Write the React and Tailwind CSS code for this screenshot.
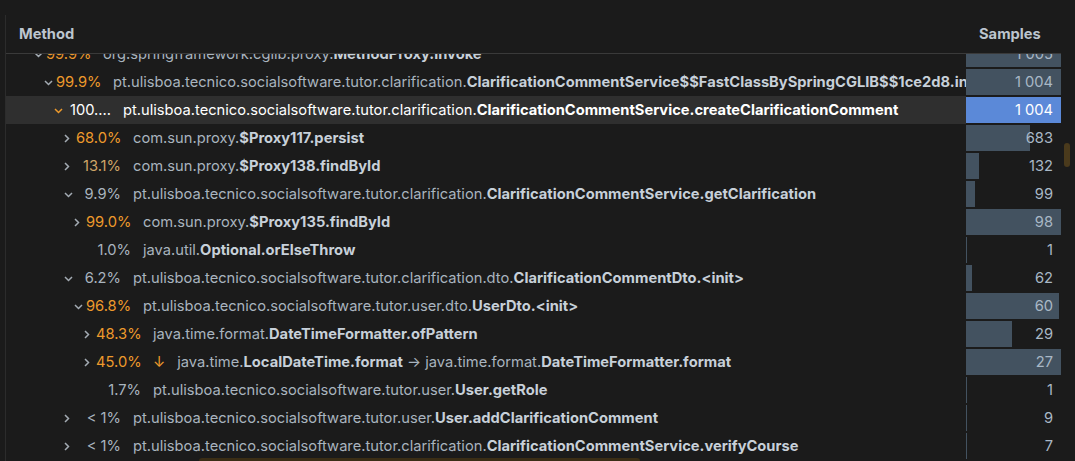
import React from "react";

const PKG = "pt.ulisboa.tecnico.socialsoftware.tutor.";

const rows = [
  { d: 0, c: "open", pct: "99.9%", tone: "hot", pkg: "org.springframework.cglib.proxy.", name: "MethodProxy.invoke", n: "1 005", w: 95 },
  { d: 1, c: "open", pct: "99.9%", tone: "hot", pkg: PKG + "clarification.", name: "ClarificationCommentService$$FastClassBySpringCGLIB$$1ce2d8.invoke", n: "1 004", w: 95 },
  { d: 2, c: "open", pct: "100....", tone: "sel", pkg: PKG + "clarification.", name: "ClarificationCommentService.createClarificationComment", n: "1 004", w: 95, selected: true },
  { d: 3, c: "closed", pct: "68.0%", tone: "hot", pkg: "com.sun.proxy.", name: "$Proxy117.persist", n: "683", w: 64 },
  { d: 3, c: "closed", pct: "13.1%", tone: "warm", pkg: "com.sun.proxy.", name: "$Proxy138.findById", n: "132", w: 13 },
  { d: 3, c: "open", pct: "9.9%", tone: "cold", pkg: PKG + "clarification.", name: "ClarificationCommentService.getClarification", n: "99", w: 9 },
  { d: 4, c: "closed", pct: "99.0%", tone: "hot", pkg: "com.sun.proxy.", name: "$Proxy135.findById", n: "98", w: 95 },
  { d: 4, c: null, pct: "1.0%", tone: "cold", pkg: "java.util.", name: "Optional.orElseThrow", n: "1", w: 1 },
  { d: 3, c: "open", pct: "6.2%", tone: "cold", pkg: PKG + "clarification.dto.", name: "ClarificationCommentDto.<init>", n: "62", w: 6 },
  { d: 4, c: "open", pct: "96.8%", tone: "hot", pkg: PKG + "user.dto.", name: "UserDto.<init>", n: "60", w: 93 },
  { d: 5, c: "closed", pct: "48.3%", tone: "hot", pkg: "java.time.format.", name: "DateTimeFormatter.ofPattern", n: "29", w: 46 },
  { d: 5, c: "closed", pct: "45.0%", tone: "hot", arrow: true, pkg: "java.time.", name: "LocalDateTime.format", pkg2: " → java.time.format.", name2: "DateTimeFormatter.format", n: "27", w: 95 },
  { d: 5, c: null, pct: "1.7%", tone: "cold", pkg: PKG + "user.", name: "User.getRole", n: "1", w: 1 },
  { d: 3, c: "closed", pct: "< 1%", tone: "cold", pkg: PKG + "user.", name: "User.addClarificationComment", n: "9", w: 1 },
  { d: 3, c: "closed", pct: "< 1%", tone: "cold", pkg: PKG + "clarification.", name: "ClarificationCommentService.verifyCourse", n: "7", w: 1 },
];

const toneClass = {
  hot: "text-[#ee9a2c]",
  warm: "text-[#cfa567]",
  cold: "text-[#a9b4bf]",
  sel: "text-white",
};

function Chevron({ kind, selected }) {
  const color = selected ? "#ee9a2c" : "#a3abb3";
  if (kind === "open") {
    return (
      <svg width="9" height="6" viewBox="0 0 9 6" className="mt-[1px]">
        <path d="M1 1 L4.5 4.5 L8 1" fill="none" stroke={color} strokeWidth="1.5" />
      </svg>
    );
  }
  return (
    <svg width="6" height="9" viewBox="0 0 6 9">
      <path d="M1 1 L4.5 4.5 L1 8" fill="none" stroke={color} strokeWidth="1.5" />
    </svg>
  );
}

function Row({ r }) {
  const sel = r.selected;
  return (
    <div className="flex h-[28px]">
      <div
        className={`flex items-center flex-1 min-w-0 overflow-hidden whitespace-nowrap ${sel ? "bg-[#2f2f2f]" : ""}`}
        style={{ paddingLeft: 28 + r.d * 10 }}
      >
        <div className="w-[12px] shrink-0 flex items-center">
          {r.c && <Chevron kind={r.c} selected={sel} />}
        </div>
        <div className={`w-[45px] shrink-0 text-right ${toneClass[r.tone]}`}>{r.pct}</div>
        {r.arrow && <span className="ml-[12px] text-[#ee9a2c]">↓</span>}
        <div className={`ml-[12px] ${sel ? "text-white" : "text-[#a9b4bf]"}`}>
          {r.pkg}
          <span className={`font-bold ${sel ? "text-white" : "text-[#c7d0d9]"}`}>{r.name}</span>
          {r.pkg2}
          {r.name2 && <span className="font-bold text-[#c7d0d9]">{r.name2}</span>}
        </div>
      </div>
      <div className="w-[95px] shrink-0 relative py-[1px]">
        <div
          className={`h-full ${sel ? "bg-[#5b89d8]" : "bg-[#435260]"}`}
          style={{ width: r.w }}
        />
        <div className={`absolute inset-0 flex items-center justify-end pr-[8px] ${sel ? "text-white" : "text-[#a9b8c6]"}`}>
          {r.n}
        </div>
      </div>
    </div>
  );
}

export default function App() {
  return (
    <div
      className="relative h-[461px] w-[1075px] overflow-hidden bg-[#1b1b1b] text-[14.7px] flex"
      style={{ fontFamily: "Inter, 'Open Sans', sans-serif" }}
    >
      <div className="w-[6px] shrink-0 border-r border-[#2c2c2c] mt-[15px]" />
      <div className="flex-1 min-w-0 flex flex-col">
        <div className="h-[54px] shrink-0 flex items-end border-b border-[#3a3a3a] w-[1055px] pb-[8px] font-bold text-[#bcc5ce]">
          <div className="flex-1 pl-[13px]">Method</div>
          <div className="w-[95px] pl-[13px]">Samples</div>
        </div>
        <div className="flex-1 overflow-hidden w-[1055px]">
          <div className="-mt-[14px]">
            {rows.map((r, i) => (
              <Row key={i} r={r} />
            ))}
          </div>
        </div>
      </div>
      <div className="w-[14px] shrink-0 relative">
        <div className="absolute left-[3px] top-[143px] w-[6px] h-[24px] rounded-full bg-[#4a3a1c]" />
      </div>
      <div className="absolute bottom-0 left-[199px] w-[441px] h-[3px] bg-[#3a2d15] rounded-t-sm" />
    </div>
  );
}
